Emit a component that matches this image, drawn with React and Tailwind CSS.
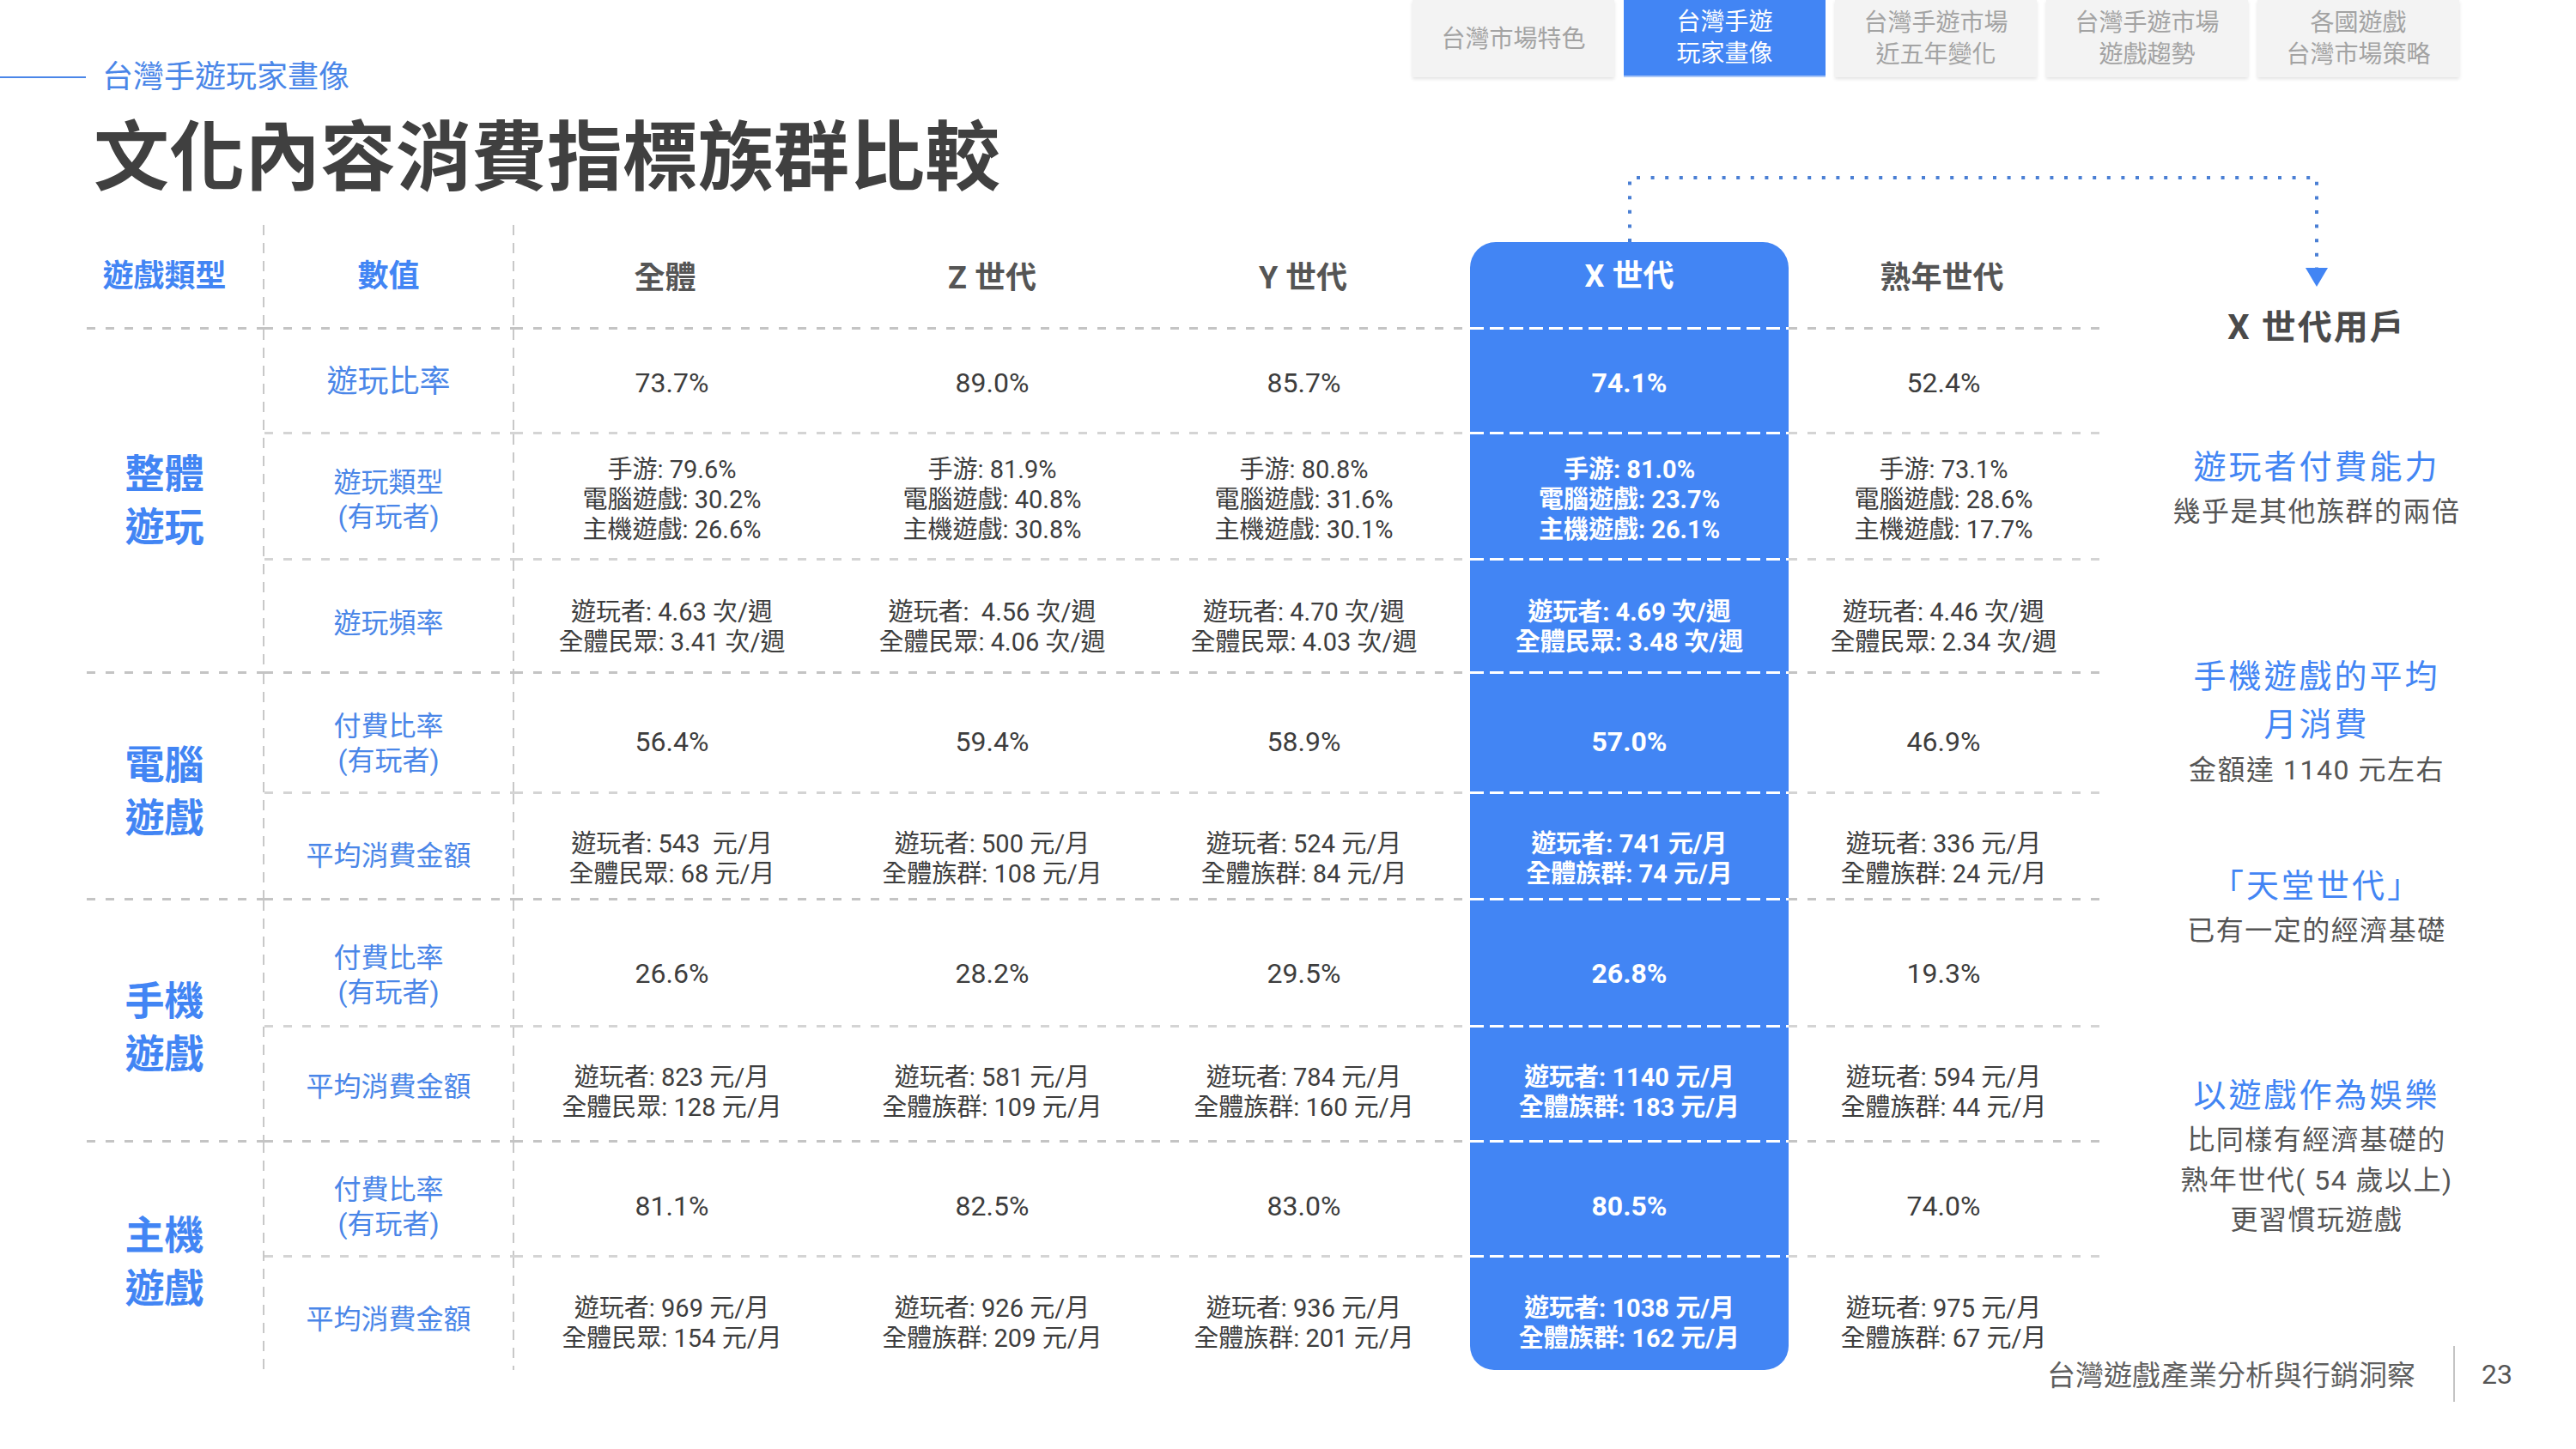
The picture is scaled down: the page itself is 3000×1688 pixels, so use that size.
import clsx from "clsx";

const cols = ["全體", "Z 世代", "Y 世代", "X 世代", "熟年世代"];
const headShift = ["pr-[20px]", "", "pr-[18px]", "", "pr-[14px]"];
const valShift = ["pr-[4px]", "", "pr-[16px]", "", "pr-[10px]"];

const groups = [
  {
    name: ["整體", "遊玩"],
    npt: "",
    rows: [
      {
        label: ["遊玩比率"],
        big: true,
        h: "h-[119px]",
        lpt: "pt-[2px]",
        vpt: "pt-[4px]",
        vals: [["73.7%"], ["89.0%"], ["85.7%"], ["74.1%"], ["52.4%"]],
      },
      {
        label: ["遊玩類型", "(有玩者)"],
        h: "h-[144px]",
        lpt: "pt-[8px]",
        vpt: "pt-[8px]",
        vals: [
          ["手游: 79.6%", "電腦遊戲: 30.2%", "主機遊戲: 26.6%"],
          ["手游: 81.9%", "電腦遊戲: 40.8%", "主機遊戲: 30.8%"],
          ["手游: 80.8%", "電腦遊戲: 31.6%", "主機遊戲: 30.1%"],
          ["手游: 81.0%", "電腦遊戲: 23.7%", "主機遊戲: 26.1%"],
          ["手游: 73.1%", "電腦遊戲: 28.6%", "主機遊戲: 17.7%"],
        ],
      },
      {
        label: ["遊玩頻率"],
        h: "h-[129px]",
        lpt: "pt-[16px]",
        vpt: "pt-[26px]",
        vals: [
          ["遊玩者: 4.63 次/週", "全體民眾: 3.41 次/週"],
          ["遊玩者:  4.56 次/週", "全體民眾: 4.06 次/週"],
          ["遊玩者: 4.70 次/週", "全體民眾: 4.03 次/週"],
          ["遊玩者: 4.69 次/週", "全體民眾: 3.48 次/週"],
          ["遊玩者: 4.46 次/週", "全體民眾: 2.34 次/週"],
        ],
      },
    ],
  },
  {
    name: ["電腦", "遊戲"],
    npt: "pt-[12px]",
    rows: [
      {
        label: ["付費比率", "(有玩者)"],
        h: "h-[137px]",
        lpt: "pt-[24px]",
        vpt: "pt-[20px]",
        vals: [["56.4%"], ["59.4%"], ["58.9%"], ["57.0%"], ["46.9%"]],
      },
      {
        label: ["平均消費金額"],
        h: "h-[121px]",
        lpt: "pt-[22px]",
        vpt: "pt-[30px]",
        vals: [
          ["遊玩者: 543  元/月", "全體民眾: 68 元/月"],
          ["遊玩者: 500 元/月", "全體族群: 108 元/月"],
          ["遊玩者: 524 元/月", "全體族群: 84 元/月"],
          ["遊玩者: 741 元/月", "全體族群: 74 元/月"],
          ["遊玩者: 336 元/月", "全體族群: 24 元/月"],
        ],
      },
    ],
  },
  {
    name: ["手機", "遊戲"],
    npt: "pt-[16px]",
    rows: [
      {
        label: ["付費比率", "(有玩者)"],
        h: "h-[145px]",
        lpt: "pt-[28px]",
        vpt: "pt-[24px]",
        vals: [["26.6%"], ["28.2%"], ["29.5%"], ["26.8%"], ["19.3%"]],
      },
      {
        label: ["平均消費金額"],
        h: "h-[131px]",
        lpt: "pt-[6px]",
        vpt: "pt-[20px]",
        vals: [
          ["遊玩者: 823 元/月", "全體民眾: 128 元/月"],
          ["遊玩者: 581 元/月", "全體族群: 109 元/月"],
          ["遊玩者: 784 元/月", "全體族群: 160 元/月"],
          ["遊玩者: 1140 元/月", "全體族群: 183 元/月"],
          ["遊玩者: 594 元/月", "全體族群: 44 元/月"],
        ],
      },
    ],
  },
  {
    name: ["主機", "遊戲"],
    npt: "pt-[12px]",
    rows: [
      {
        label: ["付費比率", "(有玩者)"],
        h: "h-[131px]",
        lpt: "pt-[18px]",
        vpt: "pt-[16px]",
        vals: [["81.1%"], ["82.5%"], ["83.0%"], ["80.5%"], ["74.0%"]],
      },
      {
        label: ["平均消費金額"],
        h: "h-[131px]",
        lpt: "pt-[12px]",
        vpt: "pt-[22px]",
        vals: [
          ["遊玩者: 969 元/月", "全體民眾: 154 元/月"],
          ["遊玩者: 926 元/月", "全體族群: 209 元/月"],
          ["遊玩者: 936 元/月", "全體族群: 201 元/月"],
          ["遊玩者: 1038 元/月", "全體族群: 162 元/月"],
          ["遊玩者: 975 元/月", "全體族群: 67 元/月"],
        ],
      },
    ],
  },
];

const tabs = [
  ["台灣市場特色"],
  ["台灣手遊", "玩家畫像"],
  ["台灣手遊市場", "近五年變化"],
  ["台灣手遊市場", "遊戲趨勢"],
  ["各國遊戲", "台灣市場策略"],
];

const grayMajor =
  "bg-[linear-gradient(to_right,#c4c4c4_10px,transparent_10px)] bg-[length:22px_3px]";
const grayMinor =
  "bg-[linear-gradient(to_right,#d4d4d4_10px,transparent_10px)] bg-[length:22px_3px]";
const whiteDash =
  "bg-[#4285f4] bg-[linear-gradient(to_right,#ffffff_16px,transparent_16px)] bg-[length:23px_3px]";

const VLine = () => (
  <div className="w-[2px] shrink-0 bg-[linear-gradient(to_bottom,#c8c8c8_12px,transparent_12px)] bg-[length:2px_21px]" />
);

// one dashed rule across the table, the X column gets white dashes
const HLine = ({ withType, major }) => (
  <div className="flex h-[3px]">
    {withType && <div className={clsx("w-[207px]", grayMajor)} />}
    <div className={clsx("w-[291px]", major ? grayMajor : grayMinor)} />
    {cols.map((c, i) => (
      <div
        key={c}
        className={clsx("w-[371px]", i === 3 ? whiteDash : major ? grayMajor : grayMinor)}
      />
    ))}
  </div>
);

const DataCell = ({ lines, hi, last, pt, shift }) => {
  const single = lines.length === 1;
  return (
    <div
      className={clsx(
        "w-[371px] flex flex-col items-center justify-center whitespace-pre",
        single ? "text-[32px] leading-[40px]" : "text-[29px] leading-[35px]",
        pt,
        shift,
        hi ? "bg-[#4285f4] text-white font-bold" : "text-[#3d3d3d]",
        hi && last && "rounded-b-[28px]"
      )}
    >
      {lines.map((l) => (
        <div key={l}>{l}</div>
      ))}
    </div>
  );
};

const Table = () => (
  <div className="flex flex-col w-[2353px]">
    {/* header */}
    <div className="flex h-[119px]">
      <div className="w-[205px] pr-[24px] flex items-center justify-center text-[36px] font-bold text-[#4285f4]">
        遊戲類型
      </div>
      <VLine />
      <div className="w-[289px] flex items-center justify-center text-[36px] font-bold text-[#4285f4]">
        數值
      </div>
      <VLine />
      {cols.map((c, i) =>
        i === 3 ? (
          <div key={c} className="w-[371px] pt-[20px] flex">
            <div className="flex-1 bg-[#4285f4] rounded-t-[30px] flex items-center justify-center pb-[20px] text-[36px] font-bold text-white">
              {c}
            </div>
          </div>
        ) : (
          <div
            key={c}
            className={clsx(
              "w-[371px] flex items-center justify-center pt-[4px] text-[36px] font-bold text-[#555555]",
              headShift[i]
            )}
          >
            {c}
          </div>
        )
      )}
    </div>
    <HLine withType major />

    {groups.map((g, gi) => (
      <div key={g.name.join("")} className="flex flex-col">
        <div className="flex">
          <div
            className={clsx(
              "w-[205px] pr-[24px] flex flex-col items-center justify-center text-[46px] leading-[62px] font-bold text-[#4285f4]",
              g.npt
            )}
          >
            {g.name.map((n) => (
              <div key={n}>{n}</div>
            ))}
          </div>
          <VLine />
          <div className="flex flex-col">
            {g.rows.map((r, ri) => {
              const lastRow = ri === g.rows.length - 1;
              const lastCell = gi === groups.length - 1 && lastRow;
              return (
                <div key={ri} className="flex flex-col">
                  <div className={clsx("flex", r.h)}>
                    <div
                      className={clsx(
                        "w-[289px] flex flex-col items-center justify-center text-[#4a86e8]",
                        r.big ? "text-[36px] leading-[44px]" : "text-[32px] leading-[40px]",
                        r.lpt
                      )}
                    >
                      {r.label.map((l) => (
                        <div key={l}>{l}</div>
                      ))}
                    </div>
                    <VLine />
                    {r.vals.map((v, ci) => (
                      <DataCell
                        key={ci}
                        lines={v}
                        hi={ci === 3}
                        last={lastCell}
                        pt={r.vpt}
                        shift={valShift[ci]}
                      />
                    ))}
                  </div>
                  {!lastRow && <HLine />}
                </div>
              );
            })}
          </div>
        </div>
        {gi < groups.length - 1 && <HLine withType major />}
      </div>
    ))}
  </div>
);

const RightPanel = () => (
  <div className="w-[488px] flex flex-col items-center text-center">
    <div className="mt-[94px] text-[40px] leading-[52px] font-bold text-[#4a4a4a] tracking-[2px]">
      X 世代用戶
    </div>
    <div className="mt-[108px] flex flex-col items-center">
      <div className="text-[38px] leading-[56px] text-[#4285f4] tracking-[3px]">遊玩者付費能力</div>
      <div className="text-[32px] leading-[48px] text-[#555555] tracking-[1.5px]">幾乎是其他族群的兩倍</div>
    </div>
    <div className="mt-[140px] flex flex-col items-center">
      <div className="text-[38px] leading-[56px] text-[#4285f4] tracking-[3px]">手機遊戲的平均</div>
      <div className="text-[38px] leading-[56px] text-[#4285f4] tracking-[3px]">月消費</div>
      <div className="text-[32px] leading-[50px] text-[#555555] tracking-[1.5px]">金額達 1140 元左右</div>
    </div>
    <div className="mt-[82px] flex flex-col items-center">
      <div className="text-[38px] leading-[56px] text-[#4285f4] tracking-[3px]">「天堂世代」</div>
      <div className="text-[32px] leading-[48px] text-[#555555] tracking-[1.5px]">已有一定的經濟基礎</div>
    </div>
    <div className="mt-[140px] flex flex-col items-center">
      <div className="text-[38px] leading-[56px] text-[#4285f4] tracking-[3px]">以遊戲作為娛樂</div>
      <div className="text-[32px] leading-[48px] text-[#555555] tracking-[1.5px]">比同樣有經濟基礎的</div>
      <div className="text-[32px] leading-[46px] text-[#555555] tracking-[1.5px]">熟年世代( 54 歲以上)</div>
      <div className="text-[32px] leading-[46px] text-[#555555] tracking-[1.5px]">更習慣玩遊戲</div>
    </div>
  </div>
);

export default function App() {
  return (
    <div className="relative w-[3000px] h-[1688px] overflow-hidden bg-white font-['Roboto','Noto_Sans_CJK_TC',sans-serif]">
      <div className="flex justify-between">
        <div className="flex flex-col pt-[68px]">
          <div className="flex items-center h-[44px]">
            <div className="w-[100px] h-[2px] bg-[#4a86e8]" />
            <div className="ml-[19px] text-[36px] leading-[44px] text-[#4a86e8]">台灣手遊玩家畫像</div>
          </div>
          <h1 className="ml-[109px] mt-[11px] mb-[8px] text-[88px] leading-[106px] font-bold text-[#404040] font-['Noto_Sans_CJK_TC',sans-serif]">
            文化內容消費指標族群比較
          </h1>
        </div>
        <div className="flex items-start gap-[11px] mr-[136px]">
          {tabs.map((t, i) => (
            <div
              key={t.join("")}
              className={clsx(
                "w-[235px] flex flex-col items-center justify-center text-[28px] leading-[37px]",
                i === 1
                  ? "h-[88px] bg-[#4285f4] text-white shadow-[0_2px_0_#a9c6f7]"
                  : "h-[90px] bg-[#f3f3f3] text-[#a3a3a3] shadow-[0_2px_4px_rgba(0,0,0,0.12)]"
              )}
            >
              {t.map((l) => (
                <div key={l}>{l}</div>
              ))}
            </div>
          ))}
        </div>
      </div>

      <div className="flex mt-[25px] ml-[101px]">
        <Table />
        <RightPanel />
      </div>

      {/* dotted connector from the X column to the side notes */}
      <svg className="absolute left-0 top-0 pointer-events-none" width="3000" height="400">
        <path
          d="M1898 282 V207 H2698 V314"
          fill="none"
          stroke="#4a7fd4"
          strokeWidth="4"
          strokeDasharray="4 12.6"
        />
        <polygon points="2685,312 2711,312 2698,334" fill="#4285f4" />
      </svg>

      <div className="absolute left-[2384px] top-[1568px] h-[65px] flex items-center">
        <div className="text-[33px] text-[#5f5f5f] font-['Noto_Sans_CJK_TC',sans-serif]">台灣遊戲產業分析與行銷洞察</div>
        <div className="ml-[44px] w-[2px] h-[65px] bg-[#c4c4c4]" />
        <div className="ml-[31px] text-[32px] text-[#555555]">23</div>
      </div>
    </div>
  );
}
